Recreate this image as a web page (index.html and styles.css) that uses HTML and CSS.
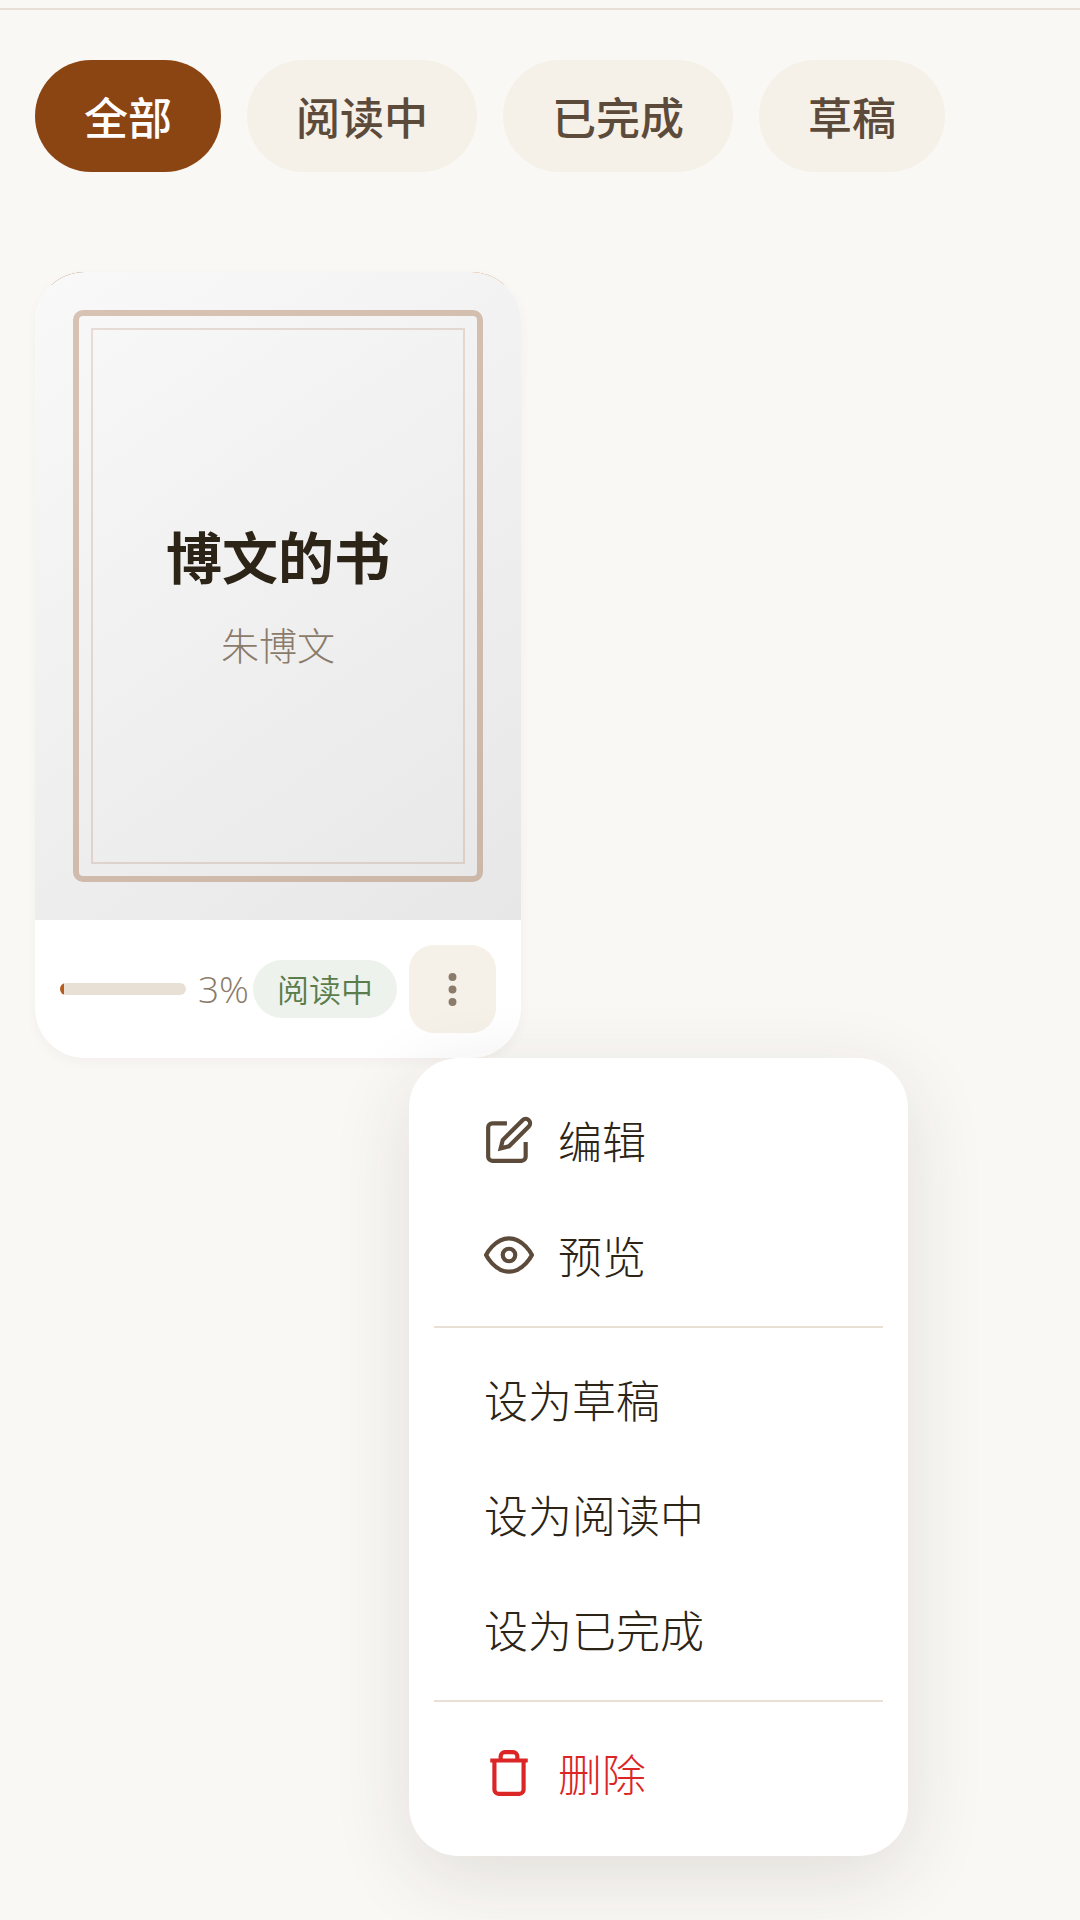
FILE: index.html
```
<!DOCTYPE html>
<html lang="zh-CN">
<head>
  <meta charset="utf-8">
  <meta name="viewport" content="width=device-width, initial-scale=1">
  <title>我的书架</title>
  <link rel="stylesheet" href="styles.css">
</head>
<body>
  <header class="topbar"></header>
  <main class="page">
    <nav class="tabs" aria-label="筛选">
      <button type="button" class="tab tab-active">全部</button>
      <button type="button" class="tab">阅读中</button>
      <button type="button" class="tab">已完成</button>
      <button type="button" class="tab">草稿</button>
    </nav>

    <section class="books">
      <article class="book">
        <div class="cover">
          <div class="cover-art">
            <h2 class="book-title">博文的书</h2>
            <p class="book-author">朱博文</p>
          </div>
        </div>
        <div class="book-footer">
          <div class="progress">
            <div class="progress-track" role="progressbar" aria-label="阅读进度" aria-valuenow="3" aria-valuemin="0" aria-valuemax="100">
              <div class="progress-fill" style="width: 3%"></div>
            </div>
            <span class="progress-text">3%</span>
          </div>
          <span class="badge">阅读中</span>
          <div class="actions">
            <button type="button" class="more" aria-label="更多操作" aria-expanded="true">
              <svg class="more-icon" viewBox="0 0 24 24" aria-hidden="true">
                <circle cx="12" cy="5" r="2.2"/>
                <circle cx="12" cy="12" r="2.2"/>
                <circle cx="12" cy="19" r="2.2"/>
              </svg>
            </button>
            <div class="menu" role="menu">
              <button type="button" class="menu-item" role="menuitem">
                <svg class="menu-icon" viewBox="0 0 24 24" aria-hidden="true">
                  <path d="M11 4H4a2 2 0 0 0-2 2v14a2 2 0 0 0 2 2h14a2 2 0 0 0 2-2v-7"/>
                  <path d="M18.5 2.5a2.121 2.121 0 0 1 3 3L12 15l-4 1 1-4 9.5-9.5z"/>
                </svg>
                编辑
              </button>
              <button type="button" class="menu-item" role="menuitem">
                <svg class="menu-icon" viewBox="0 0 24 24" aria-hidden="true">
                  <path d="M1 12s4-8 11-8 11 8 11 8-4 8-11 8-11-8-11-8z"/>
                  <circle cx="12" cy="12" r="3"/>
                </svg>
                预览
              </button>
              <hr class="menu-divider">
              <button type="button" class="menu-item" role="menuitem">设为草稿</button>
              <button type="button" class="menu-item" role="menuitem">设为阅读中</button>
              <button type="button" class="menu-item" role="menuitem">设为已完成</button>
              <hr class="menu-divider">
              <button type="button" class="menu-item menu-item-danger" role="menuitem">
                <svg class="menu-icon" viewBox="0 0 24 24" aria-hidden="true">
                  <path d="M3 6h18"/>
                  <path d="M19 6v14a2 2 0 0 1-2 2H7a2 2 0 0 1-2-2V6m3 0V4a2 2 0 0 1 2-2h4a2 2 0 0 1 2 2v2"/>
                </svg>
                删除
              </button>
            </div>
          </div>
        </div>
      </article>
    </section>
  </main>
</body>
</html>
```
FILE: styles.css
```
:root {
  --bg: #faf8f5;
  --surface: #ffffff;
  --soft: #f5f0e8;
  --line: #e8e0d5;
  --text: #2c2416;
  --text-2: #5c4a3a;
  --muted: #8b7b6b;
  --accent: #8b4513;
  --danger: #dc2626;
}

* {
  box-sizing: border-box;
}

body {
  margin: 0;
  min-height: 100vh;
  background: var(--bg);
  color: var(--text);
  font-family: "Open Sans", "Noto Sans CJK SC", sans-serif;
}

button {
  border: 0;
  font: inherit;
  cursor: pointer;
}

.topbar {
  height: 10px;
  border-bottom: 2px solid var(--line);
}

.page {
  padding: 50px 35px;
}

.tabs {
  display: flex;
  gap: 26px;
  margin-bottom: 100px;
}

.tab {
  padding: 26px 49px 22px;
  border-radius: 56px;
  background: var(--soft);
  color: var(--text-2);
  font-size: 44px;
  font-weight: 500;
  line-height: 64px;
  white-space: nowrap;
}

.tab-active {
  background: var(--accent);
  color: #ffffff;
}

.books {
  display: grid;
  grid-template-columns: repeat(2, 1fr);
  gap: 38px;
}

.book {
  border-radius: 50px;
  background: var(--surface);
  box-shadow: 0 4px 12px rgba(44, 36, 22, 0.04);
}

.cover {
  aspect-ratio: 3 / 4;
  overflow: hidden;
  border-radius: 50px 50px 0 0;
  background: linear-gradient(90deg, #8b4513, #d2691e) top / 100% 13px no-repeat;
}

.cover-art {
  position: relative;
  display: flex;
  flex-direction: column;
  align-items: center;
  justify-content: center;
  gap: 24px;
  height: 100%;
  padding-top: 2px;
  background: linear-gradient(145deg, #f9f9f9, #e7e7e7);
}

.cover-art::before,
.cover-art::after {
  content: "";
  position: absolute;
  border: solid var(--accent);
}

.cover-art::before {
  inset: 38px;
  border-width: 6px;
  border-radius: 10px;
  opacity: 0.3;
}

.cover-art::after {
  inset: 56px;
  border-width: 2px;
  opacity: 0.15;
}

.book-title {
  margin: 0;
  font-size: 56px;
  font-weight: 700;
  line-height: 72px;
}

.book-author {
  margin: 0;
  color: var(--muted);
  font-size: 38px;
  font-weight: 300;
  line-height: 56px;
}

.book-footer {
  display: flex;
  align-items: center;
  gap: 12px;
  padding: 25px;
}

.progress {
  display: flex;
  flex: 1;
  align-items: center;
  gap: 12px;
  margin-right: -8px;
}

.progress-track {
  flex: 1;
  height: 12px;
  overflow: hidden;
  border-radius: 6px;
  background: var(--line);
}

.progress-fill {
  height: 100%;
  background: #b85c1e;
}

.progress-text {
  color: var(--muted);
  font-size: 37px;
  font-weight: 300;
  line-height: 56px;
}

.badge {
  padding: 6px 24px 4px;
  border-radius: 29px;
  background: #edf2ec;
  color: #5a7d4b;
  font-size: 32px;
  font-weight: 350;
  line-height: 48px;
}

.actions {
  position: relative;
}

.more {
  display: flex;
  align-items: center;
  justify-content: center;
  width: 87px;
  height: 88px;
  padding: 0;
  border-radius: 25px;
  background: var(--soft);
}

.more-icon {
  width: 43px;
  height: 43px;
  fill: var(--muted);
}

.menu {
  position: absolute;
  top: calc(100% + 25px);
  left: 0;
  z-index: 10;
  width: 499px;
  padding: 25px;
  border-radius: 50px;
  background: var(--surface);
  box-shadow: 0 20px 80px rgba(44, 36, 22, 0.12);
}

.menu-item {
  display: flex;
  align-items: center;
  gap: 24px;
  width: 100%;
  height: 115px;
  padding: 0 50px 2px;
  background: transparent;
  color: var(--text);
  font-size: 44px;
  font-weight: 300;
  white-space: nowrap;
}

.menu-item-danger {
  color: var(--danger);
}

.menu-icon {
  flex: none;
  width: 50px;
  height: 50px;
  fill: none;
  stroke: var(--text-2);
  stroke-width: 2;
}

.menu-item-danger .menu-icon {
  stroke: var(--danger);
}

.menu-divider {
  height: 2px;
  margin: 13px 0 14px;
  border: 0;
  background: var(--line);
}
```
